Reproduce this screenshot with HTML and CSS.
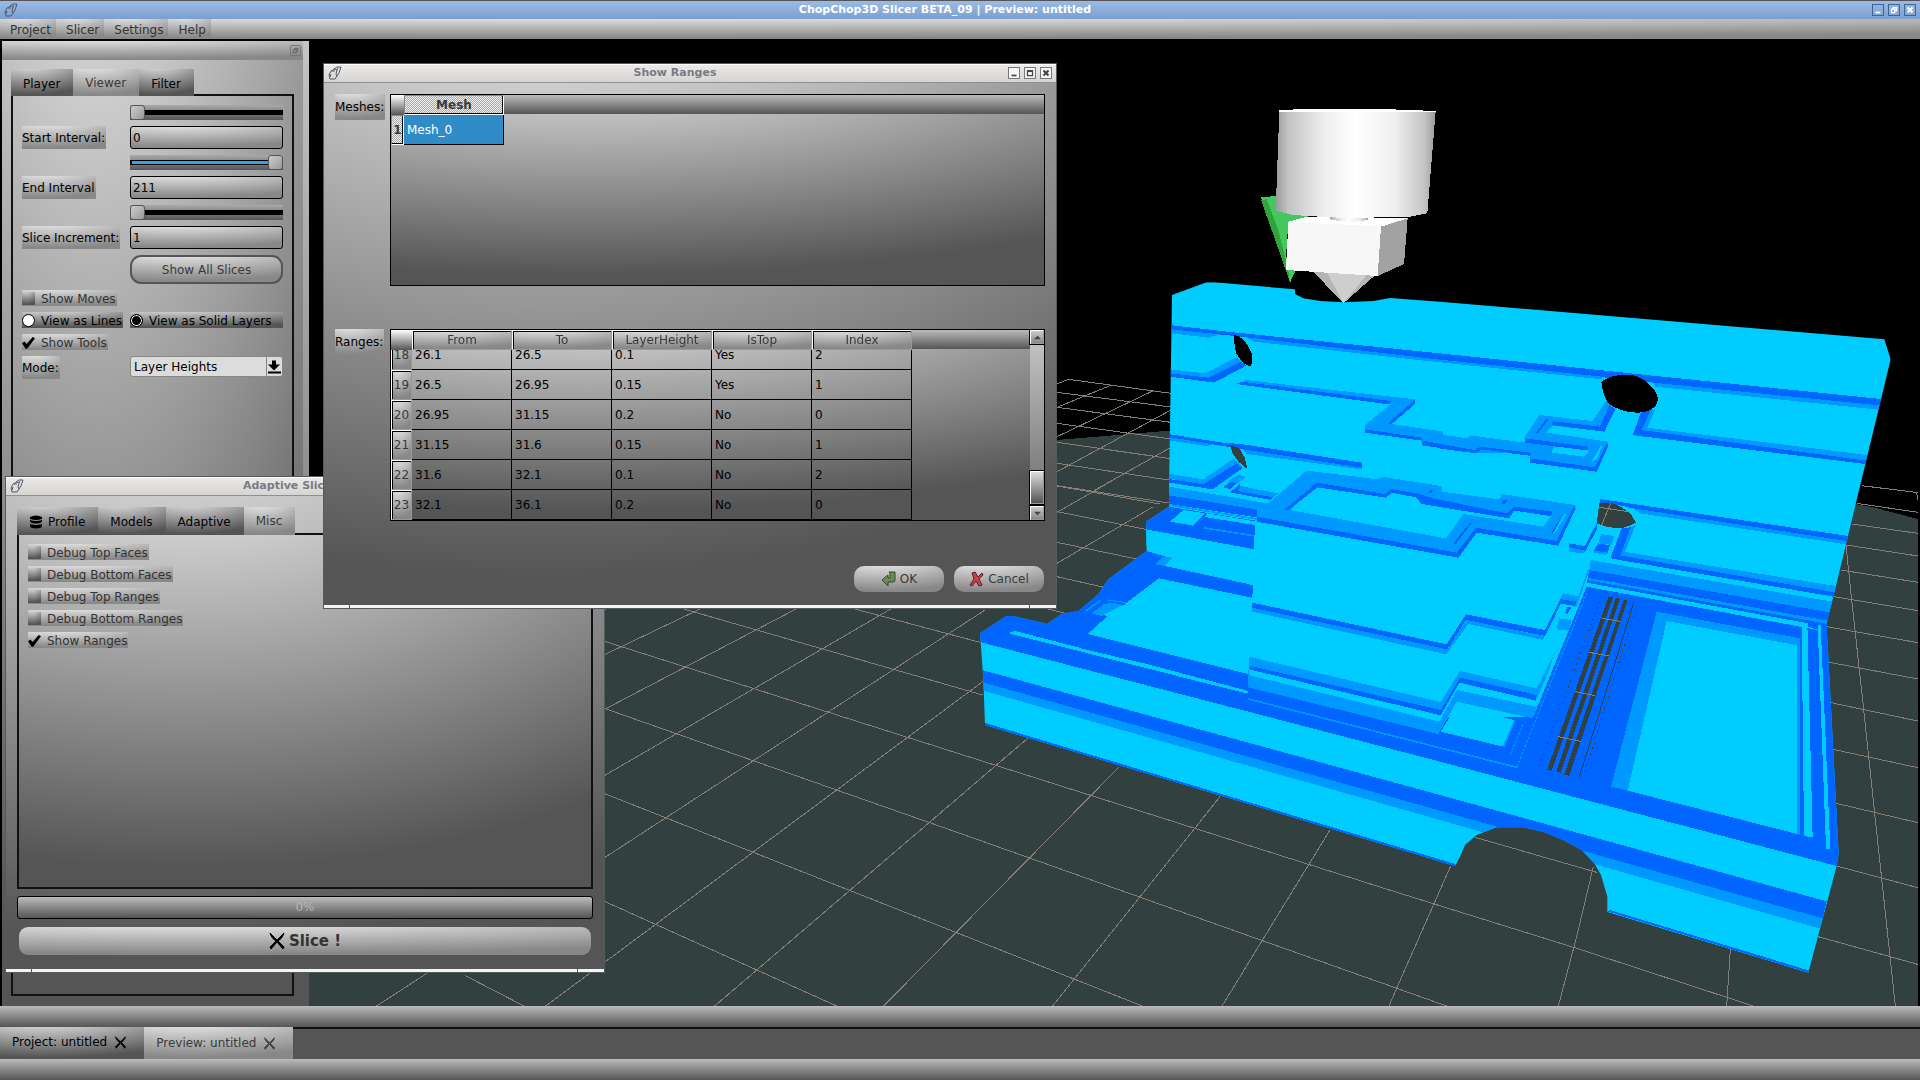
FILE: index.html
```html
<!DOCTYPE html>
<html lang="en">
<head>
  <meta charset="UTF-8">
  <meta name="viewport" content="width=device-width, initial-scale=1.0">
  <title>ChopChop3D Slicer BETA_09 | Preview: untitled</title>
  <link rel="stylesheet" href="styles.css">
</head>
<body>

  <!-- Shared icons -->
  <svg class="defs" width="0" height="0" aria-hidden="true">
    <symbol id="i-app" viewBox="0 0 14 14">
      <path d="M2 13L1 9L3 5L7 3L9 4L8 8L9 10L7 13L4 13ZM6 3L9 1L13 1L12 4L11 7L9 10M4 5L7 5M3 8L2 11M10 2L9 4" fill="none" stroke="currentColor"/>
    </symbol>
    <symbol id="i-knives" viewBox="0 0 16 18">
      <path d="M1 1C2 5 5 8 8 10L14 17L15 15L9 9C7 7 4 4 1 1ZM15 1C14 5 11 8 8 10L2 17L1 15L7 9C9 7 12 4 15 1Z" fill="currentColor" stroke="currentColor"/>
    </symbol>
    <symbol id="i-min" viewBox="0 0 12 12"><path d="M3 8h6v2H3z" fill="currentColor"/></symbol>
    <symbol id="i-max" viewBox="0 0 12 12"><path d="M3 3h6v6H3zM3 4h6" fill="none" stroke="currentColor" stroke-width="1.5"/></symbol>
    <symbol id="i-restore" viewBox="0 0 12 12"><path d="M5 5V3h4v4H7M3 5h4v4H3z" fill="none" stroke="currentColor" stroke-width="1.5"/></symbol>
    <symbol id="i-close" viewBox="0 0 12 12"><path d="M3 3l6 6M9 3l-6 6" fill="none" stroke="currentColor" stroke-width="2.5"/></symbol>
  </svg>

  <header class="titlebar">
    <svg class="app-icon"><use href="#i-app"/></svg>
    <h1>ChopChop3D Slicer BETA_09 | Preview: untitled</h1>
    <div class="win-buttons">
      <button aria-label="Minimize"><svg><use href="#i-min"/></svg></button>
      <button aria-label="Restore"><svg><use href="#i-restore"/></svg></button>
      <button aria-label="Close"><svg><use href="#i-close"/></svg></button>
    </div>
  </header>

  <nav class="menubar">
    <button>Project</button>
    <button>Slicer</button>
    <button>Settings</button>
    <button>Help</button>
  </nav>

  <main class="workspace">
    <!-- Left: dock -->
    <aside class="dock">
      <div class="dock-title">
        <button aria-label="Float"><svg><use href="#i-restore"/></svg></button>
      </div>
      <div class="dock-body">
        <div class="tabs">
          <button class="tab">Player</button>
          <button class="tab active">Viewer</button>
          <button class="tab">Filter</button>
        </div>
        <div class="pane viewer-form">
          <input class="ctl" type="range" min="0" max="211" value="0" aria-label="Start interval slider">
          <label class="chip" for="start">Start Interval:</label>
          <input class="ctl field" id="start" type="text" value="0">
          <input class="ctl filled" type="range" min="0" max="211" value="211" aria-label="End interval slider">
          <label class="chip" for="end">End Interval</label>
          <input class="ctl field" id="end" type="text" value="211">
          <input class="ctl" type="range" min="1" max="50" value="1" aria-label="Slice increment slider">
          <label class="chip" for="inc">Slice Increment:</label>
          <input class="ctl field" id="inc" type="text" value="1">
          <button class="ctl show-all">Show All Slices</button>
          <label class="check"><input type="checkbox"> Show Moves</label>
          <label class="check radio"><input type="radio" name="view"> View as Lines</label>
          <label class="check radio ctl"><input type="radio" name="view" checked> View as Solid Layers</label>
          <label class="check"><input type="checkbox" checked> Show Tools</label>
          <label class="chip" for="mode">Mode:</label>
          <div class="ctl combo">
            <select id="mode"><option>Layer Heights</option></select>
            <svg viewBox="0 0 15 18"><path d="M5 3h4v4h4l-6 6l-6-6h4zM1 14h13v2H1z"/></svg>
          </div>
        </div>
      </div>
    </aside>
    <div class="splitter"></div>

    <!-- Right: 3D preview -->
    <section class="view">
      <svg viewBox="927 123 4827 2895" preserveAspectRatio="xMidYMid slice" shape-rendering="crispEdges">
        <defs>
          <clipPath id="body">
            <path d="M2940 1900L3020 1848L3040 1848L3142 1872L3185 1842L3235 1833L3295 1783L3325 1738L3440 1653L3438 1565L3507 1520L3507 1470L3516 885L3620 847L3645 847L3885 868L3885 882L3910 895L3960 903L4030 907L4120 903L4170 894L4320 905L5653 1018L5672 1078L5500 1790L5480 1870L5481 1895L5516 2560L5510 2598L5425 2918L4822 2736L4822 2690L4803 2625L4783 2590L4745 2550L4690 2520L4630 2495L4570 2482L4490 2482L4430 2505L4395 2535L4380 2570L4365 2598L2955 2175L2950 2040Z"/>
          </clipPath>
          <linearGradient id="cyl">
            <stop offset="0" stop-color="#999"/><stop offset=".08" stop-color="#c4c4c4"/><stop offset=".3" stop-color="#eee"/>
            <stop offset=".5" stop-color="#fff"/><stop offset=".75" stop-color="#eee"/><stop offset=".93" stop-color="#c4c4c4"/><stop offset="1" stop-color="#999"/>
          </linearGradient>
        </defs>

        <!-- floor and grid -->
        <path class="floor" d="M927 1480C1700 1400 2500 1350 3171 1320L3507 1292L5500 1500L5620 1522L5754 1557V3018H927Z"/>
        <g class="grid">
          <path transform="translate(2880 270)" d="M291 882L325 868L633 910M291 907L633 951M291 952L633 997M291 1000L633 1047M291 1057L633 1106M291 1120L633 1171M291 1187L633 1240M291 952L450 887M291 1040L578 903M291 1145L633 960M405 1200L633 1072"/>
          <path transform="translate(2880 1440)" d="M291 18L600 72M291 95L558 148M291 187L535 238M291 290L432 322M291 97L460 0M291 250L580 80"/>
          <path d="M1394 1400L3230 1848M1394 1515L2940 1927M1394 1638L2948 2085M1394 1791L2880 2262L4200 2680M1394 1978L2880 2500L4340 3018M1394 2215L2880 2802L3427 3018M1394 2515L2510 3018M1394 2926L1572 3018"/>
          <path d="M927 2218L2880 1361M927 2388L2880 1454M116 3018L2880 1569M625 3018L3171 1537M1130 3018L2955 1830M1637 3018L2948 2045M2144 3018L3083 2215M2651 3018L3358 2300M3158 3018L3660 2390M3666 3018L3990 2490"/>
          <path transform="translate(4320 840)" d="M1265 617L1434 638M1430 638L1434 660M1250 670L1434 697M1235 732L1434 760M1218 795L1434 828M1203 870L1434 907M1182 950L1434 992M1160 1040L1434 1088M1168 1147L1434 1197"/>
          <path transform="translate(4200 1680)" d="M1338 -45L1354 110L1388 420L1424 760L1486 1338M1293 428L1553 483M1299 568L1553 623M1309 730L1553 788M1310 918L1553 983M1255 1130L1553 1213M225 832L590 937M0 1000L530 1165L1060 1338M-33 1338L0 1262L152 918M475 1338L530 1130L580 920M980 1338L991 1168"/>
        </g>

        <!-- sliced body -->
        <g clip-path="url(#body)">
          <path class="c" d="M2900 800H5700V2950H2900Z"/>

          <!-- base plate -->
          <path class="d" d="M2900 1900L3040 1820L3200 1800L3440 1653L3490 1668L3758 1755V1900L3745 2023L4310 2150L4600 2150L4760 1760L5481 1895L5540 1900V2606L5510 2598L4320 2285L3745 2135L2943 1927Z"/>
          <g transform="translate(2880 1440)">
            <path class="c" d="M597 295L880 354V590L867 583L383 462L443 408L400 400L490 375Z"/>
            <path class="d" d="M400 340L495 360L495 376L425 370L380 400L300 400Z"/>
            <path class="m" d="M432 372L458 368L488 374L425 408L395 400Z"/>
            <path class="m" d="M372 393L420 360L424 362L380 394ZM440 358L498 366V370L440 361Z"/>
            <path class="m" d="M610 230L640 232L615 258L585 253Z"/>
            <path class="c" d="M558 148L885 208V280L878 315L615 258L640 233L878 283V278L610 228L560 213Z"/>
            <path class="c" d="M150 455L170 454L400 514L560 552L865 633L862 641L150 461Z"/>
            <path class="d" d="M558 125L627 80L888 122L885 208L558 148Z"/>
            <path class="c" d="M630 125L670 90L735 100L700 137ZM740 100L890 125V136L735 111Z"/>
            <path class="m" d="M732 141L882 165V170L732 146Z"/>
          </g>

          <!-- centre block -->
          <g transform="translate(3480 1140)">
            <path class="c" d="M285 420L1300 500L1290 540L1283 600L1255 668L1225 750L1190 745L1185 820L1128 930L900 875L842 970L267 835L277 660Z"/>
            <path class="m" d="M265 885L267 830L842 966L900 873L1130 925L1190 805L1180 830L1118 1015L890 965L835 1062L265 922Z"/>
            <path class="d" d="M267 857L842 990L900 893L1130 945L1128 962L900 908L842 1006L267 868Z"/>
            <path class="c" d="M267 868L842 1006L898 908L1128 962L1185 830L1188 845L1128 980L892 930L838 1025L267 885Z"/>
            <path class="d" d="M277 668L860 793L918 703L1155 750L1200 660L1202 672L1155 768L918 720L862 808L277 683Z"/>
            <path class="m" d="M277 683L862 808L920 720L1152 768L1150 780L925 732L858 823L277 695Z"/>
            <path class="c" d="M890 978L1062 1020L1030 1100L842 1055Z"/>
            <path class="m" d="M1062 1020L1066 1022L1034 1100H1028Z"/>
            <path class="ml" d="M265 957L1070 1162"/>
            <path class="ml dots" d="M1070 1162L1280 640M1050 1125L1090 1030"/>
            <path class="m" d="M1208 640L1255 648L1250 665L1200 657ZM1197 715L1235 720L1225 752L1190 748ZM1283 570L1287 572L1250 680L1244 680Z"/>
            <path class="d" d="M1200 657L1250 665L1245 678L1198 670ZM1222 680L1234 682L1222 702L1216 698Z"/>
          </g>

          <!-- right wall bands -->
          <g transform="translate(4320 840)">
            <path class="m" d="M452 840L1178 965L1168 1000L448 870ZM550 815L1187 918L1185 937L540 828Z"/>
            <path class="d" d="M448 870L1168 997L1163 1022L1190 1070L1100 1038L440 920L443 895ZM512 832L540 826L1185 937L1180 950L515 836Z"/>
            <path class="m" d="M443 893L1163 1022V1032L440 900Z"/>
            <path class="c" d="M440 908L1105 1030V1040L440 920Z"/>
            <path class="d" d="M480 657L1225 768L1220 783L580 685L520 672L480 668Z"/>
            <path class="m" d="M580 685L1220 783L1218 793L600 700Z"/>
            <path class="m" d="M570 742L587 735L555 815L540 828Z"/>
            <path class="d" d="M545 745L572 742L540 828L512 832Z"/>
            <path class="m" d="M483 762L522 768L515 795L475 790ZM388 802L437 812L430 820L388 815ZM462 812L503 818L498 824L462 818Z"/>
            <path class="d" d="M475 790L510 796L503 818L462 812ZM388 790L435 798L470 730L472 745L437 812L388 802Z"/>
            <path class="floor" d="M478 668L510 668Q545 676 575 705L587 728Q560 745 530 745Q500 742 470 730Z"/>
            <path class="gl" d="M478 682L565 695M512 670L485 735"/>
          </g>

          <!-- bays and vents -->
          <g transform="translate(4200 1680)">
            <path class="m" d="M770 155L1200 235V824L1192 822L800 300L683 692L633 680Z"/>
            <path class="c" d="M800 183L1192 256V822L683 692Z"/>
            <path class="c" d="M1205 188L1222 190L1238 832L1212 828ZM1253 195H1262L1291 868L1278 866Z"/>
            <path class="floor" d="M625 112H639L455 632L441 630ZM648 114L660 116L482 638L468 636ZM672 119L682 121L508 647L492 645ZM700 127H703L539 652H536Z"/>
            <path class="vent" d="M605 108L416 622M706 150L552 645"/>
            <path class="gl" d="M605 175L660 184M566 277L628 288M525 395L586 407M474 530L542 544"/>
          </g>

          <!-- front bands -->
          <path class="d" d="M2946 2010L4320 2385L5480 2704L5468 2755L4320 2432L2948 2047Z"/>
          <path class="m" d="M2948 2047L4320 2432L5468 2755L5458 2785L4320 2460L2950 2072Z"/>
          <path class="dl" d="M2955 2172L4365 2595M4826 2732L5425 2914"/>

          <!-- upper wall -->
          <path class="d" d="M3516 976L3700 997L4320 1060L4920 1123L5643 1197L5637 1216L4960 1148L4790 1130L4320 1079L3740 1012L3516 988Z"/>
          <path class="m" d="M3516 988L3660 1003L3625 1013L3516 1000ZM3740 1012L4320 1079L4805 1130V1138L4320 1087L3760 1025ZM4960 1148L5637 1216L5635 1229L4965 1160Z"/>
          <g transform="translate(2880 270)">
            <path class="m" d="M630 838L735 850L830 802L845 815L745 865L630 852ZM628 1152L730 1168L822 1105L848 1130L745 1190L628 1165ZM850 1078L1205 1128V1138L860 1092ZM631 1042L775 1060L740 1068L631 1052Z"/>
            <path class="d" d="M630 850L745 863L842 815L860 826L762 878L630 860ZM631 1033L780 1057L850 1063L1205 1118V1133L850 1078L631 1042Z"/>
            <path d="M822 735Q850 740 865 770Q878 790 877 810L873 830Q850 825 835 800Q822 785 822 735Z"/>
            <path class="floor" d="M810 1065L838 1075L855 1105L862 1137L835 1115L818 1090Z"/>
          </g>
          <g transform="translate(3480 1140)">
            <path class="d" d="M27 297L130 313L230 250L248 264L158 328L27 308ZM190 322L210 305L232 308L212 328ZM211 337L240 312L238 332L340 350L332 360Z"/>
            <path class="m" d="M205 303L235 285L258 290L232 312ZM240 318L355 340L340 352L238 334Z"/>
            <path class="m" d="M27 320L325 370L290 410L27 350Z"/>
            <path class="d" d="M27 346L290 388V412L27 372Z"/>
            <path class="ml" d="M27 375L290 417"/>
            <path class="m" d="M258 0L765 58V72L695 132L850 155V165L925 175L935 168L1100 190L1180 200L1115 222L955 203L940 212L790 190L785 175L615 150V135L700 66L245 8Z"/>
            <path class="d" d="M228 12L245 5L700 64L685 73ZM765 60V72L695 132L683 130ZM615 148L785 173V182L940 208L960 200L1115 220V228L960 208L945 218L785 196V182L615 158Z"/>
            <path class="m" d="M440 272L655 298L665 290L845 318V335L1018 358L1025 342L1245 375L1190 485L950 450L893 525L290 412V385L325 370Z"/>
            <path class="c" d="M470 318L680 350L695 338L770 348L780 370L1045 412L1060 392L1175 405L1150 440L910 402L858 475L390 390Z"/>
            <path class="d" d="M470 308L675 342L690 327L770 340L820 355L1040 400L1062 380L1178 395L1172 408L1062 392L1048 415L785 372L768 352L695 338L678 353L472 322L385 390H373Z"/>
            <path class="d" d="M290 410L890 518L948 443L1190 483L1243 375L1247 385L1195 497L950 458L895 533L290 425ZM930 428L935 430L885 494L880 490ZM1212 395L1182 458H1175ZM1030 360L1043 362L1036 371H1026ZM810 330H820L815 338H806Z"/>
            <path class="c" d="M1215 400L1220 402L1185 458H1180Z"/>
          </g>
          <g transform="translate(4320 840)">
            <path class="m" d="M298 405L458 423L500 360L524 385L494 455L340 437L318 458L505 485V500L470 575L270 548V520L105 518L0 503V465L80 475L90 466L255 488V470Z"/>
            <path class="d" d="M340 424L480 440L508 375L526 388L493 455L335 435ZM255 475L445 500V512L255 488ZM270 535L465 562L500 490L505 495L470 575L270 548ZM320 415L326 417L294 460L288 458ZM0 492L105 510L120 500L272 518V526L125 508L108 520L0 506Z"/>
            <path class="c" d="M342 499L448 512L432 530L335 518ZM482 498L487 500L468 540L455 543Z"/>
            <path class="m" d="M630 385L645 390L622 443L1282 525L1278 542L605 452L590 455Z"/>
            <path class="d" d="M605 392H632L605 450L1278 542L1275 552L590 467L578 465Z"/>
            <path d="M484 305Q515 283 560 284Q605 285 635 320Q654 343 654 360Q645 398 590 398Q540 396 505 370Q488 345 484 305Z"/>
          </g>
        </g>

        <!-- tool head -->
        <g transform="translate(2880 270)">
          <path fill="#46c65f" d="M903 322L945 318L1045 380L985 395L978 500L1008 540L990 578Z"/>
          <path fill="#2fa43b" d="M903 330L920 328L955 420L985 540L988 570Z"/>
          <path fill="#b5b5b5" d="M1060 545L1245 556L1150 640Z"/>
          <path fill="#cecece" d="M1100 545L1220 555L1150 640Z"/>
          <path fill="#fff" d="M985 395L1040 380L1343 385L1263 410Z"/>
          <path fill="url(#cyl)" d="M1110 375H1224V390L1190 395L1140 394L1110 388Z"/>
          <path fill="#f7f7f7" d="M985 395L1263 410L1253 558L978 540Z"/>
          <path fill="#a2a2a2" d="M1263 410L1343 385L1332 522L1253 558Z"/>
          <path fill="url(#cyl)" d="M958 62L1427 64L1402 370L1350 380L1180 384L1110 382L1000 375L947 362Z"/>
          <path fill="#fff" d="M958 60L1040 57L1270 57L1427 63V67H958Z"/>
        </g>
      </svg>
    </section>
  </main>

  <div class="bar"></div>
  <div class="doc-tabs">
    <button class="tab">Project: untitled <svg><use href="#i-knives"/></svg></button>
    <button class="tab active">Preview: untitled <svg><use href="#i-knives"/></svg></button>
  </div>
  <footer class="bar"></footer>

  <!-- Adaptive Slicer window -->
  <section class="window slicer">
    <div class="window-title">
      <svg class="app-icon"><use href="#i-app"/></svg>
      <h2>Adaptive Slicer</h2>
      <div class="win-buttons">
        <button aria-label="Minimize"><svg><use href="#i-min"/></svg></button>
        <button aria-label="Maximize"><svg><use href="#i-max"/></svg></button>
        <button aria-label="Close"><svg><use href="#i-close"/></svg></button>
      </div>
    </div>
    <div class="window-body">
      <div class="tabs">
        <button class="tab"><svg class="db" viewBox="0 0 14 14"><path d="M1 2Q7-1 13 2V4Q7 6 1 4ZM1 5Q7 7 13 5V7Q7 10 1 7ZM1 9Q7 11 13 9V12Q7 15 1 12Z"/></svg>Profile</button>
        <button class="tab">Models</button>
        <button class="tab">Adaptive</button>
        <button class="tab active">Misc</button>
      </div>
      <div class="pane checks">
        <label class="check"><input type="checkbox"> Debug Top Faces</label>
        <label class="check"><input type="checkbox"> Debug Bottom Faces</label>
        <label class="check"><input type="checkbox"> Debug Top Ranges</label>
        <label class="check"><input type="checkbox"> Debug Bottom Ranges</label>
        <label class="check"><input type="checkbox" checked> Show Ranges</label>
      </div>
      <div class="progress" role="progressbar" aria-valuenow="0">0%</div>
      <button class="slice"><svg><use href="#i-knives"/></svg>Slice !</button>
    </div>
    <div class="grip"></div>
  </section>

  <!-- Show Ranges dialog -->
  <section class="window ranges">
    <div class="window-title">
      <svg class="app-icon"><use href="#i-app"/></svg>
      <h2>Show Ranges</h2>
      <div class="win-buttons">
        <button aria-label="Minimize"><svg><use href="#i-min"/></svg></button>
        <button aria-label="Maximize"><svg><use href="#i-max"/></svg></button>
        <button aria-label="Close"><svg><use href="#i-close"/></svg></button>
      </div>
    </div>
    <div class="window-body">
      <div class="row">
        <span class="chip" id="meshesLabel">Meshes:</span>
        <div class="grid-box meshes">
          <table aria-labelledby="meshesLabel">
            <thead><tr><th class="corner"></th><th class="pressed">Mesh</th></tr></thead>
            <tbody><tr><th class="pressed">1</th><td class="selected">Mesh_0</td></tr></tbody>
          </table>
        </div>
      </div>
      <div class="row">
        <span class="chip" id="rangesLabel">Ranges:</span>
        <div class="grid-box">
          <div class="scroller" id="rangesScroller">
            <table aria-labelledby="rangesLabel">
              <thead><tr><th class="corner"></th><th>From</th><th>To</th><th>LayerHeight</th><th>IsTop</th><th>Index</th></tr></thead>
              <tbody>
                <tr><th>18</th><td>26.1</td><td>26.5</td><td>0.1</td><td>Yes</td><td>2</td></tr>
                <tr><th>19</th><td>26.5</td><td>26.95</td><td>0.15</td><td>Yes</td><td>1</td></tr>
                <tr><th>20</th><td>26.95</td><td>31.15</td><td>0.2</td><td>No</td><td>0</td></tr>
                <tr><th>21</th><td>31.15</td><td>31.6</td><td>0.15</td><td>No</td><td>1</td></tr>
                <tr><th>22</th><td>31.6</td><td>32.1</td><td>0.1</td><td>No</td><td>2</td></tr>
                <tr><th>23</th><td>32.1</td><td>36.1</td><td>0.2</td><td>No</td><td>0</td></tr>
              </tbody>
            </table>
          </div>
          <div class="scrollbar">
            <button aria-label="Scroll up"><svg viewBox="0 0 8 8"><path d="M4 2l4 4H0z"/></svg></button>
            <div class="track"><div class="thumb"></div></div>
            <button aria-label="Scroll down"><svg viewBox="0 0 8 8"><path d="M4 6l4-4H0z"/></svg></button>
          </div>
        </div>
      </div>
      <div class="actions">
        <button><svg viewBox="0 0 16 16"><path d="M8 1h6v8q0 2-2 2H7v4L1 9l6-5v3h2V2z" fill="#6c8a55" stroke="#38482c"/></svg>OK</button>
        <button><svg viewBox="0 0 16 16"><path d="M3 2l3-1l3 5l4-4l1 2l-4 4l3 6l-3 1l-3-5l-4 5l-2-1l4-6z" fill="#c8404a" stroke="#5a2226"/></svg>Cancel</button>
      </div>
    </div>
    <div class="grip"></div>
  </section>

  <script>
    // ranges list opens scrolled to the last row
    const scroller = document.getElementById('rangesScroller');
    scroller.scrollTop = scroller.scrollHeight;
  </script>

</body>
</html>
```
FILE: styles.css
```css
:root {
  --soft: radial-gradient(135% 135% at 30% -40%, #fff 0, #888 100%);
  --dark: radial-gradient(135% 135% at 30% -40%, #fff 0, #555 100%);
}

* {
  margin: 0;
  padding: 0;
  box-sizing: border-box;
}

body {
  font-family: "DejaVu Sans", sans-serif;
  font-size: 12px;
  line-height: 16px;
  display: flex;
  flex-direction: column;
  min-height: 100vh;
  overflow: hidden;
  background-color: #000;
  color: #000;
}

button, input, select {
  font: inherit;
  color: inherit;
  border: none;
  background: none;
}

h1, h2 {
  font-size: 11px;
  flex: 1;
  text-align: center;
}

.defs {
  position: absolute;
}

/* Title and menu */
.titlebar {
  height: 19px;
  padding: 0 4px;
  display: flex;
  align-items: center;
  border-top: 1px solid #555;
  background: linear-gradient(#9bbbe6, #7a9fd0);
  color: #fff;
}

.app-icon {
  width: 14px;
  height: 14px;
  color: #556;
}

.win-buttons {
  display: flex;
  gap: 4px;
}

.win-buttons button {
  width: 12px;
  height: 12px;
  border: 1px solid #3f6593;
  display: flex;
}

.win-buttons svg {
  width: 100%;
  height: 100%;
}

.menubar {
  height: 20px;
  padding-left: 4px;
  display: flex;
  gap: 4px;
  background: var(--soft);
  color: #333;
}

.menubar button {
  padding: 2px 5px 0 6px;
  background: var(--soft);
}

/* Main area */
.workspace {
  flex: 1;
  display: flex;
  margin: 2px 2px 0;
}

.dock {
  width: 301px;
  display: flex;
  flex-direction: column;
}

.dock-title {
  height: 19px;
  padding: 4px 2px;
  display: flex;
  justify-content: flex-end;
  background: var(--soft);
}

.dock-title button {
  width: 11px;
  height: 11px;
  display: flex;
  border: 1px solid #777;
  border-radius: 2px;
  color: #666;
}

.dock-title svg {
  width: 100%;
  height: 100%;
}

.dock-body {
  flex: 1;
  display: flex;
  flex-direction: column;
  padding: 9px 9px 10px;
  background: var(--dark);
}

.splitter {
  width: 6px;
  background: linear-gradient(#c4c4c4, #555 95%);
}

.tabs {
  display: flex;
  position: relative;
  margin-bottom: -2px;
}

.tab {
  height: 27px;
  padding: 2px 13px 0 12px;
  display: flex;
  align-items: center;
  background: var(--dark);
}

.tab.active {
  padding-top: 0;
  background: var(--soft);
  color: #3a3a3a;
}

.pane {
  flex: 1;
  border: 2px solid #111;
  padding: 9px;
  background: var(--dark);
}

.viewer-form {
  display: grid;
  grid-template-columns: 102px 1fr;
  gap: 6px;
  align-content: start;
  justify-items: start;
}

.viewer-form > * {
  grid-column: 1;
}

.viewer-form > .ctl {
  grid-column: 2;
  width: 100%;
}

.chip {
  padding: 1px 1px 0 0;
  background: var(--soft);
  line-height: 22px;
}

.field {
  height: 23px;
  padding: 0 2px;
  border: 1px solid #000;
  border-radius: 3px;
  background: var(--soft);
}

.viewer-form input[type="range"] {
  appearance: none;
  height: 15px;
  background: linear-gradient(#000, #000) 0 5px / 100% 5px no-repeat, linear-gradient(#aaa, #555);
}

.viewer-form input[type="range"].filled {
  background: linear-gradient(#3ca0e0, #3ca0e0) 2px 6px / 150px 3px no-repeat, linear-gradient(#000, #000) 0 5px / 100% 5px no-repeat, linear-gradient(#aaa, #555);
}

input[type="range"]::-webkit-slider-thumb {
  appearance: none;
  width: 15px;
  height: 15px;
  border: 1px solid #555;
  border-radius: 3px;
  background: linear-gradient(135deg, #ccc, #999);
}

.show-all {
  height: 29px;
  border: 2px solid #555;
  border-radius: 11px;
  background: var(--soft);
  color: #3a3a3a;
}

.check {
  display: flex;
  align-items: center;
  gap: 6px;
  height: 16px;
  padding: 1px 1px 0 0;
  background: var(--soft);
  color: #333;
  white-space: nowrap;
}

.check input {
  appearance: none;
  width: 13px;
  height: 13px;
  background: var(--dark);
}

.check input:checked {
  background: #000;
  clip-path: polygon(0 55%, 18% 42%, 36% 62%, 82% 8%, 100% 18%, 40% 98%, 28% 98%);
}

.check.radio {
  background: var(--dark);
  color: #000;
}

.check.radio input {
  border: 1px solid #000;
  border-radius: 50%;
  background: #fff;
}

.check.radio input:checked {
  clip-path: none;
  background: #000;
  box-shadow: inset 0 0 0 1px #fff;
}

.combo {
  display: flex;
  height: 21px;
  border: 1px solid #888;
  border-radius: 3px;
  background-color: #dcdcdc;
}

.combo select {
  appearance: none;
  flex: 1;
  padding-left: 3px;
}

.combo svg {
  width: 16px;
  border-left: 1px solid #888;
}

.view {
  flex: 1;
  position: relative;
  overflow: hidden;
  background-color: #000;
}

.view svg {
  position: absolute;
  width: 100%;
  height: 100%;
}

.c { fill: #00ccff; }
.m { fill: #0099ff; }
.d { fill: #0066ff; }
.floor { fill: #334040; }
.grid, .gl { fill: none; stroke: #857f76; stroke-width: 3; }
.ml { fill: none; stroke: #0099ff; stroke-width: 5; }
.dots { stroke-width: 3; stroke-dasharray: 9 4; }
.dl { fill: none; stroke: #0066ff; stroke-width: 6; }
.vent { fill: none; stroke: #334040; stroke-width: 3; stroke-dasharray: 4 14; }

/* Bottom */
.bar {
  height: 21px;
  background: linear-gradient(#bbb, #555);
}

.doc-tabs {
  height: 32px;
  display: flex;
  background: linear-gradient(#111 2px, #555 2px);
}

.doc-tabs .tab {
  height: 32px;
  padding: 0 17px 2px 12px;
  gap: 7px;
}

.doc-tabs .tab.active {
  padding-bottom: 0;
}

.doc-tabs svg {
  width: 13px;
  height: 13px;
}

/* Floating windows */
.window {
  position: absolute;
  display: flex;
  flex-direction: column;
  border: 1px solid #555a5e;
}

.slicer {
  left: 5px;
  top: 476px;
  width: 600px;
  height: 497px;
}

.ranges {
  left: 323px;
  top: 63px;
  width: 734px;
  height: 546px;
}

.window-title {
  height: 19px;
  padding: 0 4px 2px;
  display: flex;
  align-items: center;
  border-top: 1px solid #fff;
  border-bottom: 1px solid #8d9196;
  background: linear-gradient(#eceae8, #d5d4d2);
  color: #777b84;
}

.window-title .win-buttons button {
  border-color: #777;
  background-color: #f5f5f5;
  color: #444;
}

.window-body {
  flex: 1;
  display: flex;
  flex-direction: column;
  padding: 11px 11px 12px;
  background: var(--dark);
}

.grip {
  height: 3px;
  background: linear-gradient(90deg, transparent 25px, #555 25px, #555 26px, transparent 26px, transparent calc(100% - 27px), #555 calc(100% - 27px), #555 calc(100% - 26px), transparent calc(100% - 26px)), #f4f4f4;
}

.slicer .tab {
  height: 28px;
}

.db {
  width: 14px;
  height: 14px;
  margin-right: 5px;
}

.checks {
  display: flex;
  flex-direction: column;
  align-items: flex-start;
  gap: 6px;
}

.progress {
  height: 23px;
  margin: 7px 0;
  border: 1px solid #000;
  border-radius: 3px;
  background: linear-gradient(#bbb, #555);
  color: #b5b5b5;
  line-height: 21px;
  text-align: center;
}

.slice {
  height: 28px;
  margin: 1px 2px 2px;
  display: flex;
  justify-content: center;
  align-items: center;
  gap: 4px;
  border-radius: 9px;
  background: var(--soft);
  color: #333;
  font-size: 15px;
  font-weight: bold;
}

.slice svg {
  width: 16px;
  height: 18px;
  color: #000;
}

/* Show Ranges */
.row {
  display: flex;
  justify-content: space-between;
  align-items: flex-start;
  margin-bottom: 43px;
}

.row .chip {
  line-height: 25px;
}

.grid-box {
  width: 655px;
  height: 192px;
  display: flex;
  border: 1px solid #000;
  background: linear-gradient(#bbb, #555) 0 0 / 100% 19px no-repeat, var(--dark);
}

.meshes {
  align-items: flex-start;
}

.scroller {
  flex: 1;
  overflow: hidden;
}

table {
  border-spacing: 0;
  table-layout: fixed;
}

td, th {
  height: 30px;
  border-right: 1px solid #000;
  border-bottom: 1px solid #000;
}

td {
  width: 100px;
  padding-left: 3px;
}

th {
  border: 1px solid;
  border-color: #fff #999 #999 #fff;
  box-shadow: inset 1px 1px #000;
  background: var(--soft);
  color: #3a3a3a;
  font-weight: normal;
}

thead th {
  position: sticky;
  top: 0;
  height: 20px;
  width: 100px;
}

tbody th {
  width: 21px;
}

thead .corner {
  width: 21px;
  border: none;
  box-shadow: none;
  background: linear-gradient(#fff, #555);
}

.meshes .corner,
.meshes tbody th {
  width: 13px;
}

th.pressed {
  border-color: #888 #fff #fff #888;
  box-shadow: inset -1px -1px #000;
  background: repeating-conic-gradient(#eee 0 25%, #aaa 0 50%) 0 0 / 2px 2px;
  font-weight: bold;
}

td.selected {
  background-color: #308cc6;
  color: #fff;
}

.scrollbar {
  width: 14px;
  display: flex;
  flex-direction: column;
  background: linear-gradient(#c8c8c8, #666);
}

.scrollbar button,
.thumb {
  height: 14px;
  border: 1px solid;
  border-color: #fff #999 #999 #fff;
  box-shadow: 0 0 0 1px #000;
  background: linear-gradient(#ccc, #888);
}

.scrollbar button {
  display: flex;
  justify-content: center;
  align-items: center;
}

.scrollbar svg {
  width: 7px;
  height: 7px;
  fill: #444;
}

.track {
  flex: 1;
  display: flex;
  flex-direction: column;
  justify-content: flex-end;
  padding-bottom: 2px;
}

.thumb {
  height: 33px;
  background: linear-gradient(#ddd, #555);
}

.actions {
  display: flex;
  justify-content: flex-end;
  gap: 10px;
  margin-top: 2px;
  padding-right: 1px;
}

.actions button {
  width: 90px;
  height: 26px;
  display: flex;
  justify-content: center;
  align-items: center;
  gap: 3px;
  border-radius: 10px;
  background: var(--soft);
  color: #3a3a3a;
}

.actions svg {
  width: 16px;
  height: 16px;
}
```
